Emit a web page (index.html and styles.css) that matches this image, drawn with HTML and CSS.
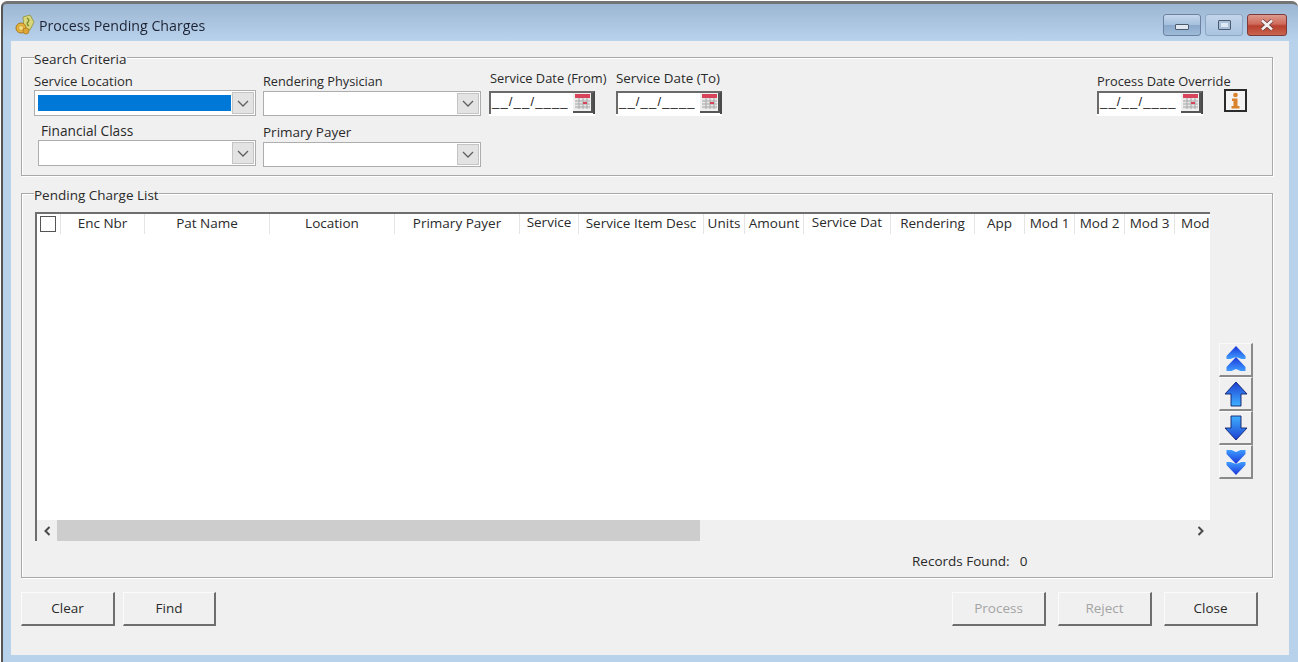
FILE: index.html
```html
<!DOCTYPE html>
<html lang="en">
<head>
<meta charset="utf-8">
<title>Process Pending Charges</title>
<link rel="stylesheet" href="styles.css">
</head>
<body>
<div class="window">
  <header class="titlebar">
    <svg class="app-icon" width="20" height="22" viewBox="0 0 20 22">
      <path d="M8 3 L15 1 L19 8 L15 16 L9 15 Z" fill="#d9d77a" stroke="#8d8f3a" stroke-width=".8"/>
      <path d="M12 4 Q15 6 13 8 Q11 10 14 12" fill="none" stroke="#7c8a2e" stroke-width="1.4"/>
      <circle cx="6" cy="14" r="5" fill="#e9b63e" stroke="#a9761b"/>
      <circle cx="6" cy="14" r="2.4" fill="#f7e08a" stroke="#b98a24" stroke-width=".7"/>
      <circle cx="11" cy="17" r="3" fill="#dca635" stroke="#a9761b" stroke-width=".7"/>
    </svg>
    <span class="title-text">Process Pending Charges</span>
    <div class="win-buttons">
      <div class="win-btn win-min"><span class="glyph-min"></span></div>
      <div class="win-btn win-max"><span class="glyph-max"></span></div>
      <div class="win-btn win-close">
        <svg width="16" height="12" viewBox="0 0 16 12"><path d="M3 1.5 L13 10.5 M13 1.5 L3 10.5" stroke="#5a3a3a" stroke-width="4"/><path d="M3 1.5 L13 10.5 M13 1.5 L3 10.5" stroke="#f6eeee" stroke-width="2.6"/></svg>
      </div>
    </div>
  </header>

  <main class="client">
    <section class="panel search">
      <span class="legend">Search Criteria</span>
      <div class="col col-1">
        <div class="field">
          <label class="lbl lbl-loc">Service Location</label>
          <div class="combo"><div class="combo-value"><span class="selected"></span></div><div class="combo-arrow"><svg width="12" height="7" viewBox="0 0 12 7"><path d="M1 1 L6 6 L11 1" fill="none" stroke="#5f5f5f" stroke-width="1.3"/></svg></div></div>
        </div>
        <div class="field field-fin">
          <label class="lbl lbl-fin">Financial Class</label>
          <div class="combo"><div class="combo-value"></div><div class="combo-arrow"><svg width="12" height="7" viewBox="0 0 12 7"><path d="M1 1 L6 6 L11 1" fill="none" stroke="#5f5f5f" stroke-width="1.3"/></svg></div></div>
        </div>
      </div>
      <div class="col col-2">
        <div class="field">
          <label class="lbl lbl-ren">Rendering Physician</label>
          <div class="combo"><div class="combo-value"></div><div class="combo-arrow"><svg width="12" height="7" viewBox="0 0 12 7"><path d="M1 1 L6 6 L11 1" fill="none" stroke="#5f5f5f" stroke-width="1.3"/></svg></div></div>
        </div>
        <div class="field field-pay">
          <label class="lbl lbl-pay">Primary Payer</label>
          <div class="combo"><div class="combo-value"></div><div class="combo-arrow"><svg width="12" height="7" viewBox="0 0 12 7"><path d="M1 1 L6 6 L11 1" fill="none" stroke="#5f5f5f" stroke-width="1.3"/></svg></div></div>
        </div>
      </div>
      <div class="col col-date col-from">
        <label class="lbl lbl-date">Service Date (From)</label>
        <div class="date"><span class="mask">__/__/____</span><div class="cal"><svg width="17" height="17" viewBox="0 0 17 17"><rect x="1" y="1" width="15" height="15" fill="#e6e6e6"/><rect x="1" y="1" width="15" height="4" fill="#d8455a"/><path d="M1 8h15M1 11h15M1 14h15M5 5v11M9 5v11M13 5v11" stroke="#a9a9a9" stroke-width="1"/><rect x="9" y="9" width="4" height="2" fill="#d8455a"/></svg></div></div>
      </div>
      <div class="col col-date col-to">
        <label class="lbl lbl-date lbl-to">Service Date (To)</label>
        <div class="date"><span class="mask">__/__/____</span><div class="cal"><svg width="17" height="17" viewBox="0 0 17 17"><rect x="1" y="1" width="15" height="15" fill="#e6e6e6"/><rect x="1" y="1" width="15" height="4" fill="#d8455a"/><path d="M1 8h15M1 11h15M1 14h15M5 5v11M9 5v11M13 5v11" stroke="#a9a9a9" stroke-width="1"/><rect x="9" y="9" width="4" height="2" fill="#d8455a"/></svg></div></div>
      </div>
      <div class="col col-date col-override">
        <label class="lbl lbl-override">Process Date Override</label>
        <div class="date"><span class="mask">__/__/____</span><div class="cal"><svg width="17" height="17" viewBox="0 0 17 17"><rect x="1" y="1" width="15" height="15" fill="#e6e6e6"/><rect x="1" y="1" width="15" height="4" fill="#d8455a"/><path d="M1 8h15M1 11h15M1 14h15M5 5v11M9 5v11M13 5v11" stroke="#a9a9a9" stroke-width="1"/><rect x="9" y="9" width="4" height="2" fill="#d8455a"/></svg></div></div>
      </div>
      <div class="info">
        <svg width="19" height="19" viewBox="0 0 19 19"><circle cx="9.5" cy="4" r="2.3" fill="#d9822b"/><path d="M6 7.5h5.5v7.5h2v2.5h-8V15h2V10H6Z" fill="#d9822b"/></svg>
      </div>
    </section>

    <section class="panel pending">
      <span class="legend">Pending Charge List</span>
      <div class="list-row">
        <div class="grid-box">
          <div class="grid-head">
            <div class="th th-check"><span class="checkbox"></span></div>
            <div class="th">Enc Nbr</div>
            <div class="th">Pat Name</div>
            <div class="th">Location</div>
            <div class="th">Primary Payer</div>
            <div class="th th-up">Service</div>
            <div class="th">Service Item Desc</div>
            <div class="th">Units</div>
            <div class="th">Amount</div>
            <div class="th th-up">Service Dat</div>
            <div class="th">Rendering</div>
            <div class="th">App</div>
            <div class="th">Mod 1</div>
            <div class="th">Mod 2</div>
            <div class="th">Mod 3</div>
            <div class="th th-last">Mod</div>
          </div>
          <div class="grid-body"></div>
          <div class="hscroll">
            <div class="sb-arrow"><svg width="9" height="10" viewBox="0 0 9 10"><path d="M6.5 1 L2.5 5 L6.5 9" fill="none" stroke="#4a4a4a" stroke-width="2"/></svg></div>
            <div class="sb-track"><div class="sb-thumb"></div></div>
            <div class="sb-arrow"><svg width="9" height="10" viewBox="0 0 9 10"><path d="M2.5 1 L6.5 5 L2.5 9" fill="none" stroke="#4a4a4a" stroke-width="2"/></svg></div>
          </div>
        </div>
        <div class="nav">
          <div class="nav-btn"><svg width="24" height="29" viewBox="0 0 24 29"><defs><linearGradient id="gu" x1="0" y1="0" x2="0" y2="1"><stop offset="0" stop-color="#1a35d8"/><stop offset="1" stop-color="#3f9dff"/></linearGradient></defs><path d="M12 1 L21.5 11 V14 H17.5 L12 12 L6.5 14 H2.5 V11 Z" fill="url(#gu)"/><path d="M12 12 L21.5 22 V26 H16.5 L12 24 L7.5 26 H2.5 V22 Z" fill="url(#gu)"/></svg></div>
          <div class="nav-btn"><svg width="26" height="28" viewBox="0 0 26 28"><defs><linearGradient id="gb" x1="0" y1="0" x2="0" y2="1"><stop offset="0" stop-color="#1d3fd2"/><stop offset="1" stop-color="#3fb0ff"/></linearGradient></defs><path d="M13 2 L24 14 H18 V26 H8 V14 H2 Z" fill="url(#gb)" stroke="#10206a" stroke-width=".9"/></svg></div>
          <div class="nav-btn"><svg width="26" height="28" viewBox="0 0 26 28"><defs><linearGradient id="gc" x1="0" y1="0" x2="0" y2="1"><stop offset="0" stop-color="#3fb0ff"/><stop offset="1" stop-color="#1d3fd2"/></linearGradient></defs><path d="M8 2 H18 V14 H24 L13 26 L2 14 H8 Z" fill="url(#gc)" stroke="#10206a" stroke-width=".9"/></svg></div>
          <div class="nav-btn"><svg width="24" height="29" viewBox="0 0 24 29"><defs><linearGradient id="gd" x1="0" y1="0" x2="0" y2="1"><stop offset="0" stop-color="#3f9dff"/><stop offset="1" stop-color="#1a35d8"/></linearGradient></defs><path d="M2.5 3 H7.5 L12 5 L16.5 3 H21.5 V7 L12 17 L2.5 7 Z" fill="url(#gd)"/><path d="M2.5 15 H6.5 L12 17 L17.5 15 H21.5 V18 L12 28 L2.5 18 Z" fill="url(#gd)"/></svg></div>
        </div>
      </div>
      <div class="records"><span>Records Found:</span><span>0</span></div>
    </section>

    <footer class="actions">
      <button class="btn">Clear</button>
      <button class="btn btn-find">Find</button>
      <div class="spacer"></div>
      <button class="btn btn-off">Process</button>
      <button class="btn btn-off">Reject</button>
      <button class="btn">Close</button>
    </footer>
  </main>
</div>
</body>
</html>
```

FILE: styles.css
```css
* { box-sizing: border-box; }
html, body { margin: 0; height: 100%; overflow: hidden; background: #fff; }
body {
  font-family: "Open Sans", "Noto Sans", sans-serif;
  font-size: 13.5px;
  color: #2a2a2a;
}
.window {
  width: 1297px;
  height: 661px;
  margin: 1px 0 0 1px;
  padding: 0 9px 7px 3px;
  border-top: 3px solid #747474;
  border-left: 2px solid #555;
  border-top-left-radius: 6px;
  border-top-right-radius: 6px;
  background: linear-gradient(180deg, #9cb7d3 0, #b9d2ec 37px, #b9d2ec 100%);
  display: flex;
  flex-direction: column;
  filter: blur(.35px);
}
.titlebar {
  height: 37px;
  flex: none;
  display: flex;
  align-items: center;
  margin-right: 2px;
  padding-left: 9px;
}
.app-icon { flex: none; margin-top: 5px; }
.title-text { margin-left: 4px; margin-top: 5px; font-size: 14.2px; color: #1d2233; }
.win-buttons { margin-left: auto; display: flex; gap: 4px; margin-top: 5px; }
.win-btn {
  height: 22px;
  width: 38px;
  border: 1px solid #6c82a0;
  border-radius: 3px;
  display: flex;
  align-items: center;
  justify-content: center;
  background: linear-gradient(180deg, #c6d8ec 0, #a6c0de 48%, #8aa8cb 52%, #9fbbd9 100%);
}
.win-max { background: linear-gradient(180deg, #c3d5ea, #a9c3e0); border-color: #8ea6c4; }
.win-close {
  width: 40px;
  border-color: #7c3a3a;
  background: linear-gradient(180deg, #dc9a8e 0, #cf6a5a 45%, #b8402e 55%, #c9654f 100%);
}
.glyph-min { width: 14px; height: 6px; margin-top: 4px; background: #dfe8f2; border: 1px solid #4c5a6c; border-radius: 1px; }
.glyph-max { width: 13px; height: 10px; background: #dfe8f2; border: 1px solid #4c5a6c; box-shadow: inset 0 0 0 2px #a9c0da; border-radius: 1px; }

.client {
  flex: 1;
  background: #f0f0f0;
  margin-left: 5px;
  display: flex;
  flex-direction: column;
  padding: 16px 16px 0 10px;
}
.panel {
  position: relative;
  border: 1px solid #a8a8a8;
  box-shadow: 1px 1px 0 #fff, inset 1px 1px 0 #fff;
  flex: none;
}
.legend {
  position: absolute;
  left: 12px;
  top: -6px;
  height: 16px;
  line-height: 14px;
  background: #f0f0f0;
  white-space: nowrap;
}
.search { height: 119px; display: flex; }
.lbl { display: block; height: 16px; line-height: 16px; white-space: nowrap; }
.lbl-loc { font-size: 13.1px; margin-bottom: 1px; }
.lbl-fin { font-size: 13.7px; padding-left: 3px; margin-bottom: 1px; }
.lbl-ren { font-size: 12.75px; margin-bottom: 2px; }
.lbl-pay { margin-bottom: 2px; }
.col { flex: none; display: flex; flex-direction: column; }
.col-1 { width: 222px; margin-left: 12px; padding-top: 15px; }
.col-2 { width: 218px; margin-left: 7px; padding-top: 15px; }
.field-fin { margin: 7px 0 0 4px; }
.field-pay { margin-top: 8px; }
.combo {
  height: 26px;
  display: flex;
  background: #fff;
  border: 1px solid #adadad;
  padding: 1px;
}
.col-2 .combo { height: 25px; }
.combo-value { flex: 1; background: #fff; padding: 3px 1px 3px 2px; }
.selected { display: block; height: 100%; background: #0078d7; }
.combo-arrow {
  width: 22px;
  flex: none;
  background: #e3e3e3;
  border: 1px solid #c4c4c4;
  display: flex;
  align-items: center;
  justify-content: center;
}
.col-date { width: 106px; padding-top: 12px; }
.lbl-date { font-size: 12.85px; padding-left: 1px; margin-bottom: 5px; }
.lbl-to { font-size: 13.4px; padding-left: 0; }
.col-from { margin-left: 8px; }
.col-to { margin-left: 21px; }
.col-override { margin-left: auto; padding-top: 15px; }
.lbl-override { font-size: 12.85px; margin-bottom: 2px; }
.date {
  height: 25px;
  background: #fff;
  display: flex;
  align-items: flex-start;
  position: relative;
}
.date::before {
  content: "";
  position: absolute;
  left: 0;
  top: 0;
  right: 0;
  bottom: 2px;
  border: 2px solid #6a6a6a;
  border-right-color: #4a4a4a;
  border-bottom: 0;
  pointer-events: none;
}
.mask {
  font-family: "Liberation Sans", sans-serif;
  font-size: 13px;
  line-height: 20px;
  margin: 1px 0 0 3px;
  letter-spacing: .09em;
  color: #222;
}
.cal {
  margin-left: auto;
  margin-right: 2px;
  margin-top: 1px;
  width: 20px;
  height: 21px;
  background: #f0f0f0;
  border-right: 2px solid #555;
  border-bottom: 2px solid #555;
  display: flex;
  align-items: center;
  justify-content: center;
}
.info {
  flex: none;
  width: 23px;
  height: 23px;
  margin: 31px 25px 0 21px;
  background: #f4f4f4;
  border: 2px solid #2b2b2b;
  display: flex;
  align-items: center;
  justify-content: center;
}

.pending { height: 385px; margin-top: 17px; display: flex; flex-direction: column; }
.list-row { display: flex; margin: 18px 0 0 13px; }
.grid-box {
  width: 1175px;
  height: 329px;
  background: #fff;
  border-top: 2px solid #6e6e6e;
  border-left: 2px solid #6e6e6e;
  display: flex;
  flex-direction: column;
}
.grid-head {
  height: 20px;
  flex: none;
  display: grid;
  grid-template-columns: 24px 84px 125px 125px 125px 59px 125px 41px 59px 87px 84px 50px 50px 50px 50px 36px;
  overflow: hidden;
}
.th {
  text-align: center;
  border-right: 1px solid #e5e5e5;
  line-height: 19px;
  white-space: nowrap;
  min-width: 0;
}
.th-up { line-height: 17px; }
.th-last { border-right: 0; text-align: left; padding-left: 6px; }
.th-check { display: flex; align-items: center; padding-left: 3px; }
.checkbox { width: 16px; height: 16px; border: 1.5px solid #555; background: #fff; }
.grid-body { flex: 1; }
.hscroll { height: 21px; flex: none; display: flex; background: #f0f0f0; }
.sb-arrow { width: 20px; flex: none; display: flex; align-items: center; justify-content: center; }
.sb-track { flex: 1; }
.sb-thumb { width: 643px; height: 100%; background: #cdcdcd; }
.nav { margin: 131px 0 0 9px; width: 34px; display: flex; flex-direction: column; }
.nav-btn {
  width: 34px;
  height: 34px;
  background: #f0f0f0;
  border-top: 1px solid #fafafa;
  border-left: 1px solid #fafafa;
  border-right: 2px solid #8a8a8a;
  border-bottom: 2px solid #8a8a8a;
  display: flex;
  align-items: center;
  justify-content: center;
}
.records { margin: 10px 0 0 890px; display: flex; gap: 10px; line-height: 20px; }

.actions { display: flex; margin-top: 14px; padding-right: 15px; gap: 12px; }
.btn {
  width: 94px;
  height: 34px;
  font: inherit;
  line-height: 28px;
  color: #2a2a2a;
  background: #f0f0f0;
  border-style: solid;
  border-width: 1px 2px 2px 1px;
  border-color: #fbfbfb #6e6e6e #6e6e6e #fbfbfb;
  padding: 0 0 2px;
}
.btn-find { margin-left: -4px; width: 93px; }
.btn-off { color: #a4a4a4; }
.spacer { flex: 1; }
```
